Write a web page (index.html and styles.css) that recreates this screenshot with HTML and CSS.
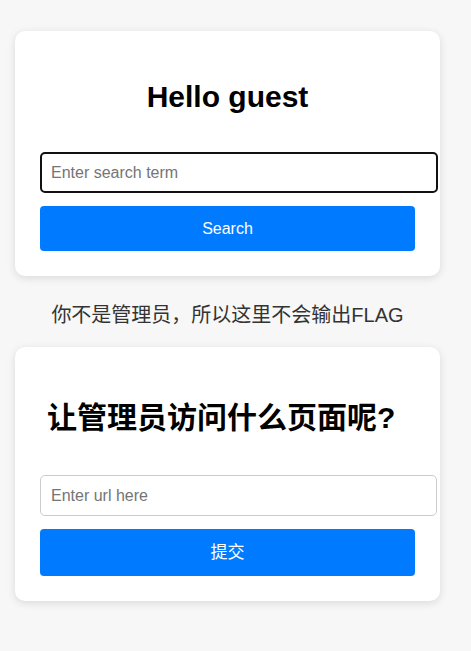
FILE: index.html
```html
<!DOCTYPE html>
<html lang="zh-CN">
<head>
    <meta charset="UTF-8">
    <meta name="viewport" content="width=device-width, initial-scale=1.0">
    <title>Hello guest</title>
    <link rel="stylesheet" href="styles.css">
</head>
<body>
    <div class="card">
        <h1 class="title">Hello guest</h1>
        <form>
            <input type="text" class="field field-active" name="search" placeholder="Enter search term">
            <button type="submit" class="btn">Search</button>
        </form>
    </div>

    <p class="notice">你不是管理员，所以这里不会输出FLAG</p>

    <div class="card">
        <h1 class="title title-left">让管理员访问什么页面呢?</h1>
        <form>
            <input type="text" class="field" name="url" placeholder="Enter url here">
            <button type="submit" class="btn btn-tall">提交</button>
        </form>
    </div>
</body>
</html>
```

FILE: styles.css
```css
body {
    margin: 0;
    padding: 31px 15px;
    background-color: #f7f7f7;
    font-family: "Liberation Sans", Arial, "Noto Sans CJK SC", sans-serif;
}
.card {
    width: 375px;
    padding: 25px;
    background-color: #fff;
    border-radius: 10px;
    box-shadow: 0 2px 8px rgba(0, 0, 0, 0.12);
}
.title {
    margin: 23px 0 38px;
    font-size: 30px;
    line-height: 35px;
    text-align: center;
    color: #000;
}
.title-left {
    margin: 28px 0 40px;
    padding-left: 7px;
    text-align: left;
}
.field {
    display: block;
    width: 100%;
    padding: 10px;
    margin: 0 0 13px;
    border: 1px solid #ccc;
    border-radius: 5px;
    font-family: inherit;
    font-size: 16px;
    line-height: 19px;
    color: #000;
    background: #fff;
}
.field::placeholder {
    color: #757575;
}
/* search box as it looks while focused */
.field-active {
    padding: 9px 10px 9px 9px;
    border: 2px solid #111;
}
.btn {
    display: block;
    width: 100%;
    padding: 13px;
    border: none;
    border-radius: 4px;
    background-color: #007bff;
    color: #fff;
    font-family: inherit;
    font-size: 16px;
    line-height: 19px;
    cursor: pointer;
}
.btn-tall {
    padding: 14px 13px;
    font-size: 17px;
}
.notice {
    margin: 27px 0 20px;
    width: 425px;
    font-size: 20px;
    line-height: 24px;
    text-align: center;
    color: #333;
}
```
